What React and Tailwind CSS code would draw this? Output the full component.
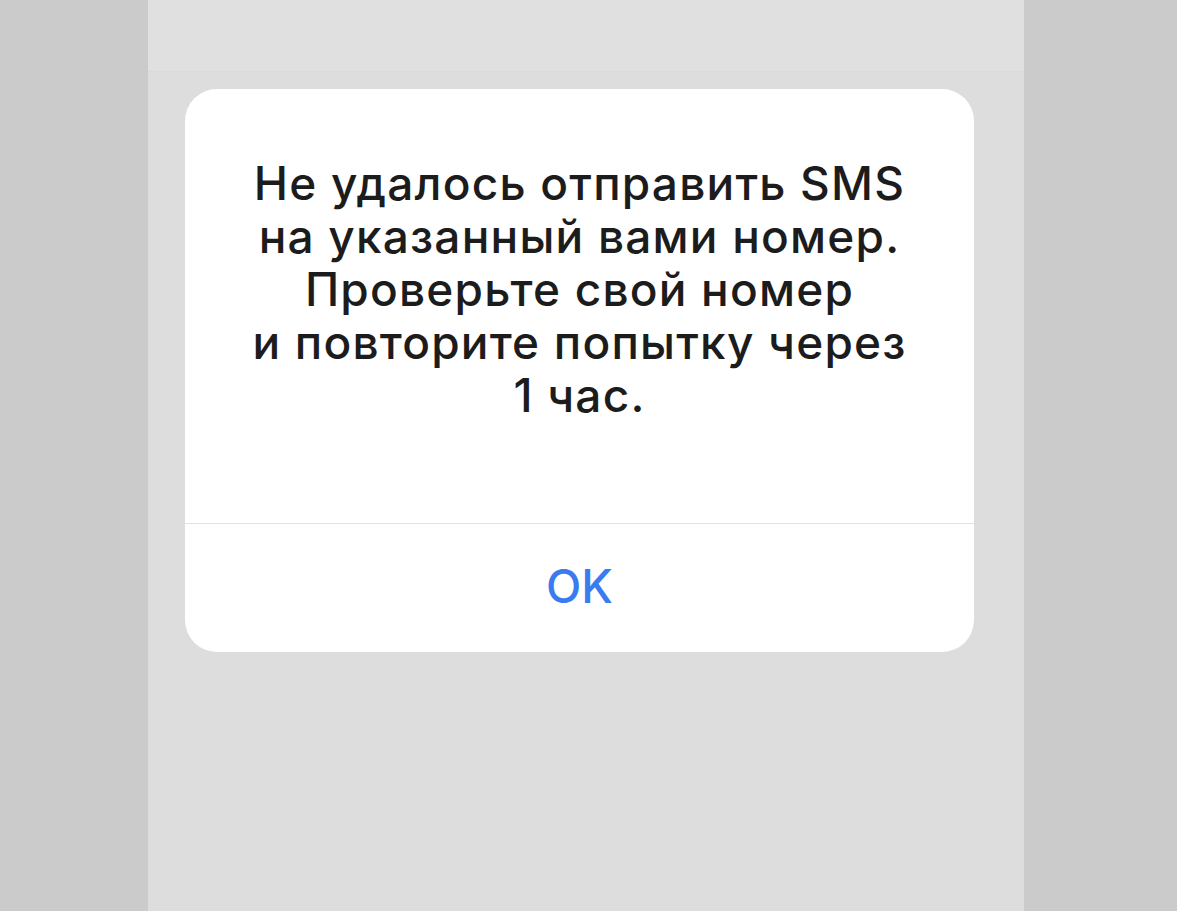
export default function App() {
  const lines = [
    'Не удалось отправить SMS',
    'на указанный вами номер.',
    'Проверьте свой номер',
    'и повторите попытку через',
    '1 час.',
  ];

  return (
    <div className="flex h-[911px] w-[1177px] bg-[#cbcbcb] font-['Inter',sans-serif]">
      <div className="ml-[148px] flex w-[876px] flex-col bg-[#dddddd]">
        {/* lighter strip behind the status area */}
        <div className="h-[72px] border-b border-[#dadada] bg-[#e0e0e0]" />
        <div className="ml-[37px] mt-[17px] flex w-[789px] flex-col rounded-[32px] bg-white">
          <div className="flex h-[434px] flex-col items-center pt-[68px] text-[46px] font-medium leading-[53px] tracking-[1.2px] text-[#1c1c1c]">
            {lines.map((line) => (
              <p key={line}>{line}</p>
            ))}
          </div>
          <div className="h-px bg-[#e2e2e2]" />
          <button className="flex h-[128px] items-center justify-center pb-[4px] text-[46px] font-medium text-[#3a7cf0]">
            OK
          </button>
        </div>
      </div>
    </div>
  );
}
